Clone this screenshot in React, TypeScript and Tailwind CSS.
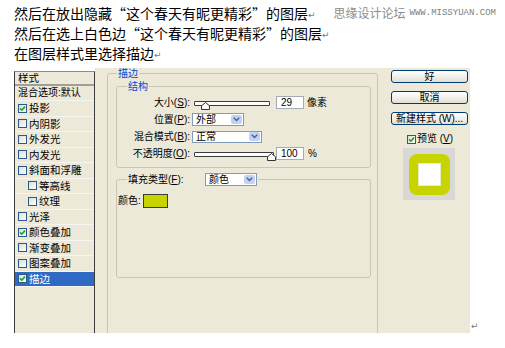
import React from "react";

const UI = "font-['Liberation_Sans','Noto_Sans_CJK_SC',sans-serif]";

function Ret({ className = "" }: { className?: string }) {
  return (
    <span className={`font-['DejaVu_Sans',sans-serif] text-[9px] leading-none text-[#7a7a7a] ${className}`}>↵</span>
  );
}

function Check({ checked }: { checked?: boolean }) {
  return (
    <span className="inline-flex h-[9px] w-[9px] shrink-0 items-center justify-center border border-[#2a5a8a] bg-gradient-to-br from-[#dcdcd6] to-white">
      {checked && (
        <svg width="7" height="7" viewBox="0 0 7 7">
          <path d="M1 3.4 L2.8 5.2 L6 1.6" fill="none" stroke="#21a121" strokeWidth="1.6" />
        </svg>
      )}
    </span>
  );
}

function Select({ className, label }: { className: string; label: string }) {
  return (
    <div className={`flex items-center border border-[#7f9db9] bg-white ${className}`}>
      <span className="flex-1 pl-[3px] text-[10px] leading-none">{label}</span>
      <span className="mr-[1px] flex h-[9px] w-[11px] items-center justify-center rounded-[2px] bg-[#c1d2f8]">
        <svg width="7" height="5" viewBox="0 0 7 5">
          <path d="M0.8 0.8 L3.5 3.6 L6.2 0.8" fill="none" stroke="#4d6185" strokeWidth="1.4" />
        </svg>
      </span>
    </div>
  );
}

function Slider({ className, pos }: { className: string; pos: number }) {
  return (
    <div className={`relative h-[12px] ${className}`}>
      <div className="absolute left-0 right-0 top-[4px] h-[5px] rounded-[1px] border border-[#3a3a3a] bg-white" />
      <svg className="absolute top-[5px]" style={{ left: pos }} width="9" height="8" viewBox="0 0 9 8">
        <path d="M0.5 7.5 V3.8 L4.5 0.5 L8.5 3.8 V7.5 Z" fill="#fff" stroke="#333" />
      </svg>
    </div>
  );
}

function NumBox({ value }: { value: string }) {
  return (
    <div className="flex h-[13px] w-[28px] items-center border border-[#a5acb5] bg-white pl-[4px] text-[10px] leading-none">
      {value}
    </div>
  );
}

function Btn({ children }: { children: React.ReactNode }) {
  return (
    <div className="flex h-[13px] w-[77px] items-center justify-center rounded-[3px] border border-[#003c74] bg-gradient-to-b from-white to-[#e2e0d4] text-[10px] leading-none">
      {children}
    </div>
  );
}

const rows: { label: string; checked?: boolean; indent?: boolean; selected?: boolean }[] = [
  { label: "投影", checked: true },
  { label: "内阴影" },
  { label: "外发光" },
  { label: "内发光" },
  { label: "斜面和浮雕" },
  { label: "等高线", indent: true },
  { label: "纹理", indent: true },
  { label: "光泽" },
  { label: "颜色叠加", checked: true },
  { label: "渐变叠加" },
  { label: "图案叠加" },
  { label: "描边", checked: true, selected: true },
];

function Label({ children }: { children: React.ReactNode }) {
  return <span className="w-[73px] shrink-0 text-right text-[10px] leading-none">{children}</span>;
}

export default function App() {
  return (
    <div className="h-[348px] w-[505px] overflow-hidden bg-white text-black">
      <div className="pl-[14px] pt-[3px] font-['Noto_Sans_CJK_SC',sans-serif] text-[14px] leading-[20px]">
        <div className="flex h-[20px] items-center">
          <span>然后在放出隐藏“这个春天有昵更精彩”的图层</span>
          <Ret className="mt-[4px]" />
          <span className="ml-[18px] text-[12px] text-[#8c8c8c]">思缘设计论坛</span>
          <span className="ml-[4px] font-['Liberation_Mono',monospace] text-[9px] text-[#808080]">WWW.MISSYUAN.COM</span>
        </div>
        <div className="flex h-[20px] items-center">
          <span>然后在选上白色边“这个春天有昵更精彩”的图层</span>
          <Ret className="mt-[4px]" />
        </div>
        <div className="flex h-[20px] items-center">
          <span>在图层样式里选择描边</span>
          <Ret className="mt-[4px]" />
        </div>
      </div>

      <div className={`ml-[14px] mt-[5px] flex h-[265px] ${UI}`}>
        {/* left list */}
        <div className="mt-[3px] flex w-[81px] flex-col border-l border-r border-t border-l-[#3c3c3c] border-r-[#3c3c3c] border-t-[#8c8c8c] bg-[#ece9d8]">
          <div className="flex h-[14px] items-center border-b-[2px] border-[#a09e96] pl-[3px] text-[10.5px] leading-none">样式</div>
          <div className="flex h-[15px] items-center border-b border-[#f6f5ef] pl-[3px] text-[10px] leading-none">混合选项:默认</div>
          {rows.map((r) => (
            <div
              key={r.label}
              className={`flex h-[15.5px] items-center gap-[2px] border-b border-[#f6f5ef] text-[10.5px] leading-none ${
                r.indent ? "pl-[13px]" : "pl-[3px]"
              } ${r.selected ? "bg-[#316ac5] text-white" : ""}`}
            >
              <Check checked={r.checked} />
              <span>{r.label}</span>
            </div>
          ))}
        </div>

        {/* right part */}
        <div className="flex w-[375px] items-start overflow-hidden bg-[#ece9d8]">
          <fieldset className="ml-[12px] h-[272px] w-[271px] rounded-[3px] border border-[#c9c6b6] pl-[8px] pr-[6px]">
            <legend className="ml-[1px] px-[1px] text-[10px] leading-[11px] text-[#0046d5]">描边</legend>

            <fieldset className="mt-[2px] rounded-[3px] border border-[#c9c6b6] pb-[5px] pt-[2px]">
              <legend className="ml-[10px] px-[1px] text-[10px] leading-[11px] text-[#0046d5]">结构</legend>
              <div className="flex h-[17px] items-center">
                <Label>
                  大小(<u>S</u>):
                </Label>
                <Slider className="ml-[4px] w-[76px]" pos={7} />
                <div className="ml-[6px]">
                  <NumBox value="29" />
                </div>
                <span className="ml-[3px] text-[10px] leading-none">像素</span>
              </div>
              <div className="flex h-[17px] items-center">
                <Label>
                  位置(<u>P</u>):
                </Label>
                <Select className="ml-[2px] h-[13px] w-[52px]" label="外部" />
              </div>
              <div className="flex h-[17px] items-center">
                <Label>
                  混合模式(<u>B</u>):
                </Label>
                <Select className="ml-[2px] h-[12px] w-[70px]" label="正常" />
              </div>
              <div className="flex h-[17px] items-center">
                <Label>
                  不透明度(<u>O</u>):
                </Label>
                <Slider className="ml-[4px] w-[80px]" pos={73} />
                <div className="ml-[2px]">
                  <NumBox value="100" />
                </div>
                <span className="ml-[4px] text-[10px] leading-none">%</span>
              </div>
            </fieldset>

            <fieldset className="mt-[5px] rounded-[3px] border border-[#c9c6b6] pb-[69px] pt-[8px]">
              <legend className="ml-[10px] flex h-[13px] items-center px-[1px]">
                <span className="w-[77px] text-[10px] leading-none">
                  填充类型(<u>F</u>):
                </span>
                <Select className="h-[13px] w-[52px]" label="颜色" />
              </legend>
              <div className="flex h-[14px] items-center pl-[1px]">
                <span className="text-[10px] leading-none">颜色:</span>
                <span className="ml-[2px] h-[14px] w-[25px] border border-[#3a3a3a] bg-[#c8d400]" />
              </div>
            </fieldset>
          </fieldset>

          <div className="ml-[13px] flex flex-col pt-[2px]">
            <div className="flex flex-col gap-[8px]">
              <Btn>好</Btn>
              <Btn>取消</Btn>
              <Btn>新建样式 (W)...</Btn>
            </div>
            <div className="mt-[9px] flex h-[10px] items-center gap-[1px] pl-[16px] text-[10px] leading-none">
              <Check checked />
              <span>
                预览 (<u>V</u>)
              </span>
            </div>
            <div className="ml-[12px] mt-[4px] flex h-[52px] w-[52px] items-center justify-center bg-[#d8d8d4]">
              <div className="flex h-[41px] w-[41px] items-center justify-center rounded-[8px] bg-[#c8d400]">
                <div className="h-[23px] w-[23px] border border-[#e8ecc8] bg-white" />
              </div>
            </div>
          </div>
        </div>
        <Ret className="mb-[2px] ml-[1px] self-end" />
      </div>
      <div className="pl-[14px] pt-[6px]">
        <Ret />
      </div>
    </div>
  );
}
